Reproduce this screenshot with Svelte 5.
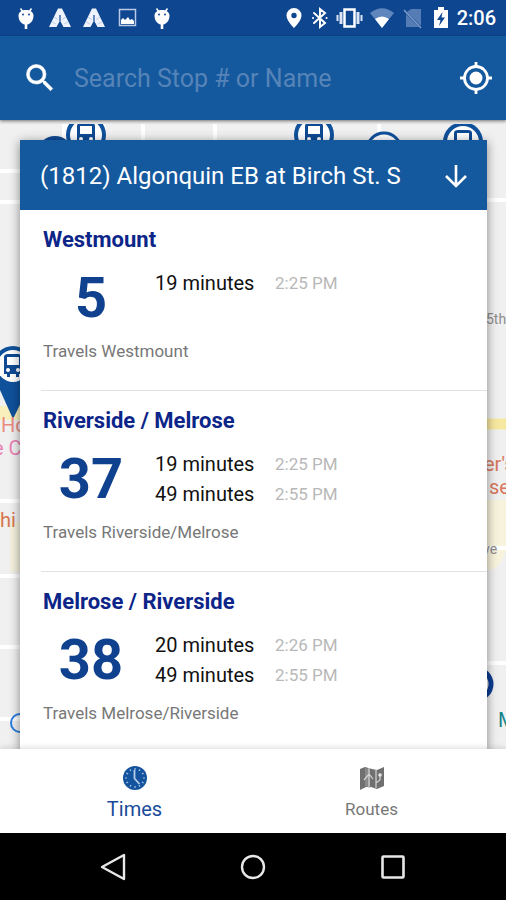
<script>
  const routes = [
    {
      name: 'Westmount',
      number: '5',
      note: 'Travels Westmount',
      times: [{ wait: '19 minutes', clock: '2:25 PM' }]
    },
    {
      name: 'Riverside / Melrose',
      number: '37',
      note: 'Travels Riverside/Melrose',
      times: [
        { wait: '19 minutes', clock: '2:25 PM' },
        { wait: '49 minutes', clock: '2:55 PM' }
      ]
    },
    {
      name: 'Melrose / Riverside',
      number: '38',
      note: 'Travels Melrose/Riverside',
      times: [
        { wait: '20 minutes', clock: '2:26 PM' },
        { wait: '49 minutes', clock: '2:55 PM' }
      ]
    }
  ];
  const ticks = [0, 30, 60, 90, 120, 150, 180, 210, 240, 270, 300, 330];
  let query = $state('');
</script>

{#snippet droid()}
  <svg width="22" height="24" viewBox="0 0 22 24" fill="#fff">
    <path d="M5.500 2.500 8 6M16.500 2.500 14 6" stroke="#fff" stroke-width="1.500" />
    <path d="M3.500 9.500C3.500 6 7 4 11 4s7.500 2 7.500 5.500c0 5-3 8.500-6.200 9v4.500H9.700v-4.500C6.500 18 3.500 14.500 3.500 9.500z" />
    <circle cx="8" cy="8.500" r="1" fill="#0f4690" />
    <circle cx="14" cy="8.500" r="1" fill="#0f4690" />
  </svg>
{/snippet}

{#snippet tent()}
  <svg width="22" height="24" viewBox="0 0 22 24">
    <path d="M9 2.500h4L22 21h-7.500L11 14.500 7.500 21H0z" fill="#eef2fc" />
    <path d="m5 11 4 2.500M13 13.500l4-2.500M3 16l4 2M15 18l4-2" stroke="#b4c5e4" stroke-width="0.800" />
    <path d="M11 9v6" stroke="#0f4690" stroke-width="1.200" />
  </svg>
{/snippet}

{#snippet bus(x, y)}
  <g transform="translate({x} {y})">
    <circle r="20" fill="#0f519b" />
    <circle r="16" fill="#fff" />
    <path d="M-9-9q0-3 4-3H5q4 0 4 3V8H6v3H3V8H-3v3H-6V8H-9z" fill="#0f4a94" />
    <path d="M-6-9H6v8H-6z" fill="#fff" />
    <circle cx="-5" cy="4" r="2" fill="#fff" />
    <circle cx="5" cy="4" r="2" fill="#fff" />
  </g>
{/snippet}

<div class="screen">
  <div class="status">
    <div class="group left">
      {@render droid()}
      {@render tent()}
      {@render tent()}
      <svg width="22" height="24" viewBox="0 0 22 24">
        <path d="M2.500 3.500h16v16h-16z" fill="none" stroke="#b9cae8" stroke-width="1.500" />
        <path d="M4 18v-4l2-2 2 2 3-3 2 3 2-1 2 2v3z" fill="#fff" />
      </svg>
      {@render droid()}
    </div>
    <div class="group right">
      <svg width="20" height="24" viewBox="0 0 20 24">
        <path d="M10 2a7.500 7.500 0 0 0-7.500 7.500C2.500 15 10 22 10 22s7.500-7 7.500-12.500A7.500 7.500 0 0 0 10 2zm0 4.800a2.700 2.700 0 1 1 0 5.400 2.700 2.700 0 0 1 0-5.400z" fill="#fff" />
      </svg>
      <svg width="20" height="24" viewBox="0 0 20 24">
        <path d="m4 7 11 10-5 4V3l5 4L4 17M3 12h.1M16.500 12h.1" fill="none" stroke="#fff" stroke-width="2" stroke-linecap="round" />
      </svg>
      <svg width="27" height="24" viewBox="0 0 27 24">
        <path d="M8.500 3.500h10v17h-10z" fill="none" stroke="#fff" stroke-width="2.500" />
        <path d="M5 6v12M22 6v12" stroke="#dce5f5" stroke-width="3" />
        <path d="M1.500 9v6M25.500 9v6" stroke="#dce5f5" stroke-width="2" />
      </svg>
      <svg width="26" height="24" viewBox="0 0 26 24">
        <path d="M1 7q12-9.500 24 0L13 22z" fill="#5f86bd" />
        <path d="M6 13q7-5 14 0L13 22z" fill="#fff" />
      </svg>
      <svg width="24" height="24" viewBox="0 0 24 24">
        <path d="M10 3h10v17L6 6z M5 8l13 13H5z" fill="#557cb5" />
        <path d="m3 4 17 18" stroke="#7d9bc9" stroke-width="1.500" />
      </svg>
      <svg width="20" height="24" viewBox="0 0 20 24">
        <path d="M7 1h6v3h4v18H3V4h4z" fill="#fff" />
        <path d="M11.500 6 6 14h3.500L8 20l6-8.500h-3.500z" fill="#0f4690" />
      </svg>
      <time>2:06</time>
    </div>
  </div>

  <form class="search" onsubmit={(e) => e.preventDefault()}>
    <button type="submit" aria-label="Search">
      <svg width="36" height="36" viewBox="0 0 24 24">
        <path fill="#fff" stroke="#fff" stroke-width="0.400" d="M15.500 14h-.79l-.28-.27A6.470 6.470 0 0 0 16 9.500 6.500 6.500 0 1 0 9.500 16c1.610 0 3.090-.59 4.230-1.570l.27.28v.79l5 4.990L20.490 19zm-6 0C7.010 14 5 11.990 5 9.500S7.010 5 9.500 5 14 7.010 14 9.500 11.990 14 9.500 14z" />
      </svg>
    </button>
    <input type="text" bind:value={query} placeholder="Search Stop # or Name" aria-label="Search Stop # or Name" />
    <button type="button" aria-label="My location">
      <svg width="36" height="36" viewBox="0 0 36 36">
        <circle cx="18" cy="18" r="11.500" fill="none" stroke="#fff" stroke-width="2.800" />
        <circle cx="18" cy="18" r="6.500" fill="#fff" />
        <path d="M18 2v5M18 29v5M2 18h5M29 18h5" stroke="#fff" stroke-width="2.800" />
      </svg>
    </button>
  </form>

  <main>
    <svg class="map" viewBox="0 0 506 629" preserveAspectRatio="xMidYMin slice" aria-hidden="true">
      <path d="M0 0h506v629H0z" fill="#f0f0f0" />
      <path d="M476 380h30v50q-10 30-30 15z" fill="#f7f3dc" />
      <path d="M10 402h14v50H10z" fill="#f4f1df" />
      <path d="M0 51h30M0 82h30M480 80h26M0 381h30M0 456h30M0 527h30M0 599h30M480 428h26M480 543h26M143 0v30M215 0v30M379 0v30" stroke="#fff" stroke-width="4" />
      <path d="M480 304h26" stroke="#f7e8a0" stroke-width="11" />
      <path d="M0 293h30" stroke="#f9efbd" stroke-width="14" />
      <path d="M62 0h44v20H62z" fill="#fff" />
      <circle cx="55" cy="34" r="18" fill="#0f4a94" />
      {@render bus(86, 15)}
      {@render bus(314, 15)}
      <circle cx="384" cy="30" r="17" fill="#fff" stroke="#0f519b" stroke-width="3" />
      {@render bus(463, 22)}
      <path d="M0 0h506v4H0z" fill="#e9e9e9" />
      <path d="M-8 252h44L13 299z" fill="#0f519b" />
      {@render bus(13, 246)}
      <circle cx="476" cy="564" r="15" fill="none" stroke="#0d3d94" stroke-width="5" />
      <circle cx="20" cy="603" r="9" fill="none" stroke="#2a7de1" stroke-width="2" />
      <g font-size="20">
        <text x="1" y="312" fill="#ea8a80">Ho</text>
        <text x="-7" y="335" fill="#ea80b5">e C</text>
        <text x="0" y="407" fill="#d8774c">hi</text>
        <text x="484" y="351" fill="#d8775c">er's</text>
        <text x="489" y="374" fill="#d8775c">se</text>
        <text x="498" y="607" fill="#16858a">M</text>
      </g>
      <g font-size="14" fill="#8d8d8d">
        <text x="486" y="204">5th</text>
        <text x="483" y="434">ve</text>
      </g>
    </svg>

    <section class="card">
      <header>
        <h1>(1812) Algonquin EB at Birch St. S</h1>
        <button type="button" aria-label="Collapse">
          <svg width="28" height="28" viewBox="0 0 28 28">
            <path d="M14 3v21M4 14l10 10 10-10" fill="none" stroke="#fff" stroke-width="2.600" />
          </svg>
        </button>
      </header>
      <ul>
        {#each routes as route}
          <li>
            <h2>{route.name}</h2>
            <div class="body">
              <strong>{route.number}</strong>
              <div class="times">
                {#each route.times as t}
                  <p><span class="wait">{t.wait}</span><span class="clock">{t.clock}</span></p>
                {/each}
              </div>
            </div>
            <p class="note">{route.note}</p>
          </li>
        {/each}
      </ul>
    </section>
  </main>

  <nav class="tabs">
    <button type="button" class="active" aria-current="page">
      <svg width="26" height="26" viewBox="0 0 26 26">
        <circle cx="13" cy="13" r="12" fill="#14549f" />
        {#each ticks as a}
          <path d="M13 3v2" stroke="#a9c2e2" stroke-width="1.200" transform="rotate({a} 13 13)" />
        {/each}
        <path d="M12.500 5v8.500l5 5.500" fill="none" stroke="#b8cde8" stroke-width="1.800" />
      </svg>
      <span>Times</span>
    </button>
    <button type="button">
      <svg width="26" height="26" viewBox="0 0 26 26">
        <path d="m1 4 5-2 7 2 5 1 7-3v19l-7 3-6-2-5 0-6 3z" fill="#707070" />
        <path d="m6 3 5 1v19l-5-2z" fill="#8a8a8a" />
        <path d="M10 3v20M17 5v18M5 15l5-6 4 5M17 18l4-3v-5" fill="none" stroke="#d4d4d4" stroke-width="1.200" />
        <circle cx="21" cy="10" r="1.800" fill="#e6e6e6" />
      </svg>
      <span>Routes</span>
    </button>
  </nav>

  <nav class="system" aria-label="System">
    <button type="button" aria-label="Back">
      <svg width="30" height="30" viewBox="0 0 30 30"><path d="M26 3v24L4 15z" fill="none" stroke="#e8e8e8" stroke-width="2.400" stroke-linejoin="round" /></svg>
    </button>
    <button type="button" aria-label="Home">
      <svg width="30" height="30" viewBox="0 0 30 30"><circle cx="15" cy="15" r="11" fill="none" stroke="#e8e8e8" stroke-width="2.400" /></svg>
    </button>
    <button type="button" aria-label="Recent apps">
      <svg width="30" height="30" viewBox="0 0 30 30"><rect x="4.500" y="4.500" width="21" height="21" rx="1" fill="none" stroke="#e8e8e8" stroke-width="2.600" /></svg>
    </button>
  </nav>
</div>

<style>
  .screen {
    display: flex;
    flex-direction: column;
    height: 100vh;
    font-family: Roboto, sans-serif;
    background: #fff;
  }
  svg { display: block; flex: none; }
  h1, h2, p, ul { margin: 0; padding: 0; font-weight: 400; }
  ul { list-style: none; }
  button {
    border: 0;
    padding: 0;
    background: none;
    font: inherit;
    color: inherit;
    cursor: pointer;
  }
  .status {
    display: flex;
    flex: none;
    justify-content: space-between;
    height: 36px;
    padding: 0 10px 0 15px;
    background: #0f4690;
  }
  .group { display: flex; align-items: center; }
  .left { gap: 12px; }
  .right { gap: 6px; }
  time { font-size: 20px; line-height: 24px; font-weight: 500; color: #fff; }
  .search {
    position: relative;
    z-index: 2;
    display: flex;
    flex: none;
    align-items: center;
    gap: 16px;
    height: 84px;
    padding: 0 12px 0 22px;
    background: #14589d;
    box-shadow: 0 1px 3px rgba(0, 0, 0, 0.5);
  }
  input {
    flex: 1;
    min-width: 0;
    border: 0;
    padding: 2px 0 0;
    outline: none;
    background: none;
    font: 25px/32px Roboto, sans-serif;
    color: #fff;
  }
  input::placeholder { color: #5684b8; opacity: 1; }
  main {
    position: relative;
    flex: 1;
    min-height: 0;
    overflow: hidden;
    padding: 20px 19px 0 20px;
  }
  .map { position: absolute; inset: 0; width: 100%; height: 100%; }
  .card {
    position: relative;
    background: #fff;
    box-shadow: 0 2px 10px rgba(0, 0, 0, 0.45);
  }
  header {
    display: flex;
    align-items: center;
    justify-content: space-between;
    height: 70px;
    padding: 2px 17px 0 20px;
    box-sizing: border-box;
    background: #14589d;
    color: #fff;
  }
  h1 { font-size: 24px; line-height: 32px; white-space: nowrap; }
  ul { padding-left: 21px; }
  li {
    height: 180px;
    padding: 16px 0 0 2px;
    box-sizing: border-box;
  }
  li + li { border-top: 1px solid #e2e2e2; height: 181px; }
  h2 { font-size: 22px; line-height: 28px; font-weight: 700; color: #0c2589; }
  .body { display: flex; height: 84px; }
  strong {
    width: 96px;
    padding-top: 12px;
    text-align: center;
    font-size: 56px;
    line-height: 64px;
    font-weight: 700;
    color: #10418f;
  }
  .times { padding: 14px 0 0 16px; }
  .times p { display: flex; line-height: 30px; }
  .wait { width: 120px; font-size: 20px; color: #111; }
  .clock { font-size: 17px; color: #b8b8b8; }
  .note { font-size: 17px; line-height: 26px; color: #777; }
  .tabs {
    position: relative;
    display: flex;
    flex: none;
    height: 84px;
    padding: 0 16px;
    background: #fff;
    box-shadow: 0 -1px 6px rgba(0, 0, 0, 0.15);
  }
  .tabs button {
    flex: 1;
    display: flex;
    flex-direction: column;
    align-items: center;
    padding-top: 16px;
    gap: 6px;
    font-size: 17px;
    line-height: 24px;
    color: #777;
  }
  .tabs .active { font-size: 20px; color: #1a4b9a; }
  .system {
    display: flex;
    flex: none;
    align-items: center;
    justify-content: center;
    gap: 110px;
    height: 67px;
    background: #000;
  }
</style>
